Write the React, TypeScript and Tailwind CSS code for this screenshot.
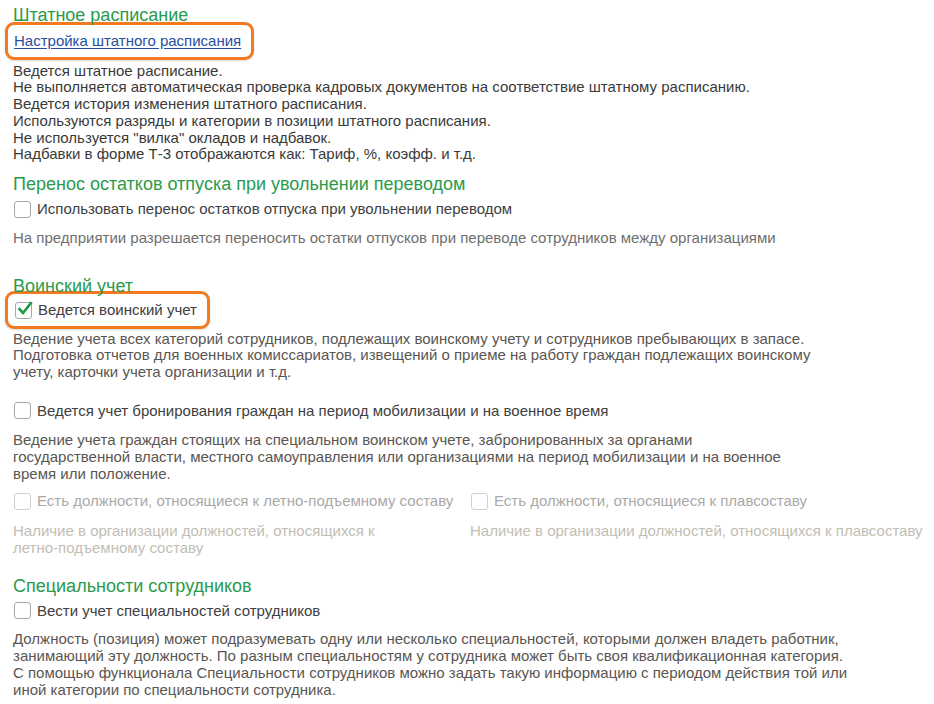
import React from "react";

function Box({ checked, disabled }: { checked?: boolean; disabled?: boolean }) {
  return (
    <span
      className={
        "relative inline-flex h-[17px] w-[17px] shrink-0 items-center justify-center rounded-[3px] border bg-white " +
        (disabled ? "border-[#d0d0d0]" : "border-[#a8a8a8]")
      }
    >
      {checked && (
        <svg viewBox="0 0 16 16" className="absolute -top-[2px] left-[1px] h-[16px] w-[16px]">
          <path d="M2.5 8.2 L6 12 L13.8 2.2" fill="none" stroke="#1a9b45" strokeWidth={2.6} strokeLinecap="square" />
        </svg>
      )}
    </span>
  );
}

function Check({
  label,
  checked,
  disabled,
  className = "",
}: {
  label: string;
  checked?: boolean;
  disabled?: boolean;
  className?: string;
}) {
  return (
    <label className={"flex h-[20px] items-center gap-[6px] pl-[1px] " + className}>
      <Box checked={checked} disabled={disabled} />
      <span className={disabled ? "text-[#a9a9a9]" : "text-[#404040]"}>{label}</span>
    </label>
  );
}

function Title({ children, className = "" }: { children: React.ReactNode; className?: string }) {
  return <div className={"h-[20px] text-[18px] leading-[20px] text-[#2a9b4c] " + className}>{children}</div>;
}

function Highlight({ children, className = "" }: { children: React.ReactNode; className?: string }) {
  return (
    <div
      className={
        "-ml-[8px] flex h-[38px] items-center rounded-[9px] border-[3px] border-[#f47a22] bg-white pl-[6px] shadow-[0_1px_2px_rgba(0,0,0,0.15)] " +
        className
      }
    >
      {children}
    </div>
  );
}

export default function App() {
  return (
    <div
      className="h-[704px] w-[934px] overflow-hidden bg-white pl-[13px] text-[15px] leading-[16.8px] text-[#3a3a3a]"
      style={{ fontFamily: '"Liberation Sans", Arial, sans-serif' }}
    >
      <Title className="mt-[5px]">Штатное расписание</Title>
      <Highlight className="-mt-[3px] w-[249px]">
        <a href="#" className="text-[#2a4ea0] underline underline-offset-2">
          Настройка штатного расписания
        </a>
      </Highlight>
      <div className="mt-[2.5px]">
        Ведется штатное расписание.
        <br />
        Не выполняется автоматическая проверка кадровых документов на соответствие штатному расписанию.
        <br />
        Ведется история изменения штатного расписания.
        <br />
        Используются разряды и категории в позиции штатного расписания.
        <br />
        Не используется "вилка" окладов и надбавок.
        <br />
        Надбавки в форме Т-3 отображаются как: Тариф, %, коэфф. и т.д.
      </div>

      <Title className="mt-[11px]">Перенос остатков отпуска при увольнении переводом</Title>
      <Check className="mt-[5px]" label="Использовать перенос остатков отпуска при увольнении переводом" />
      <div className="mt-[10.5px] text-[#6f6f6f]">
        На предприятии разрешается переносить остатки отпусков при переводе сотрудников между организациями
      </div>

      <Title className="mt-[29.5px]">Воинский учет</Title>
      <Highlight className="-mt-[5px] w-[205px]">
        <Check checked label="Ведется воинский учет" />
      </Highlight>
      <div className="mt-[1.5px] text-[#5a5652]">
        Ведение учета всех категорий сотрудников, подлежащих воинскому учету и сотрудников пребывающих в запасе.
        <br />
        Подготовка отчетов для военных комиссариатов, извещений о приеме на работу граждан подлежащих воинскому
        <br />
        учету, карточки учета организации и т.д.
      </div>
      <Check className="mt-[20px]" label="Ведется учет бронирования граждан на период мобилизации и на военное время" />
      <div className="mt-[11.5px] text-[#5a5652]">
        Ведение учета граждан стоящих на специальном воинском учете, забронированных за органами
        <br />
        государственной власти, местного самоуправления или организациями на период мобилизации и на военное
        <br />
        время или положение.
      </div>
      <div className="mt-[9px] flex">
        <div className="w-[457px]">
          <Check disabled label="Есть должности, относящиеся к летно-подъемному составу" />
          <div className="mt-[11.5px] text-[#c2beb4]">
            Наличие в организации должностей, относящихся к
            <br />
            летно-подъемному составу
          </div>
        </div>
        <div>
          <Check disabled label="Есть должности, относящиеся к плавсоставу" />
          <div className="mt-[11.5px] whitespace-nowrap text-[#c2beb4]">
            Наличие в организации должностей, относящихся к плавсоставу
          </div>
        </div>
      </div>

      <Title className="mt-[19px]">Специальности сотрудников</Title>
      <Check className="mt-[5px]" label="Вести учет специальностей сотрудников" />
      <div className="mt-[10.5px] text-[#5a5652]">
        Должность (позиция) может подразумевать одну или несколько специальностей, которыми должен владеть работник,
        <br />
        занимающий эту должность. По разным специальностям у сотрудника может быть своя квалификационная категория.
        <br />
        С помощью функционала Специальности сотрудников можно задать такую информацию с периодом действия той или
        <br />
        иной категории по специальности сотрудника.
      </div>
    </div>
  );
}
